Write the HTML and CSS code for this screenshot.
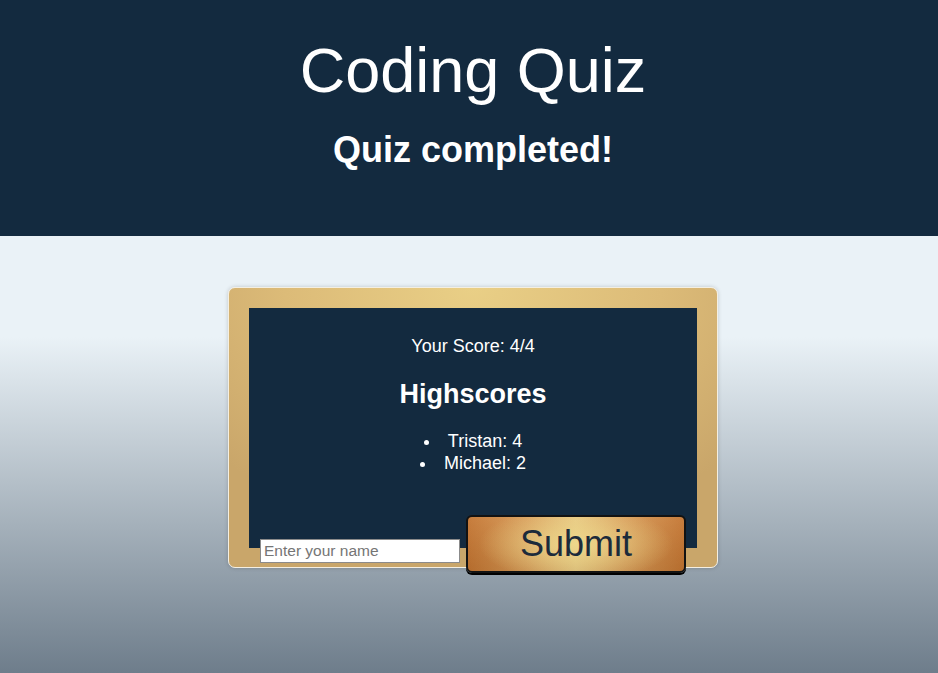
FILE: index.html
```html
<!DOCTYPE html>
<html lang="en">
<head>
<meta charset="utf-8">
<title>Coding Quiz</title>
<link rel="stylesheet" href="styles.css">
</head>
<body>
<header class="header">
  <h1 class="title">Coding Quiz</h1>
  <h2 class="subtitle">Quiz completed!</h2>
</header>
<main class="main">
  <section class="card">
    <div class="panel">
      <p class="score">Your Score: 4/4</p>
      <h3 class="hs-title">Highscores</h3>
      <ul class="hs-list">
        <li>Tristan: 4</li>
        <li>Michael: 2</li>
      </ul>
    </div>
    <form class="form-row">
      <input class="name-input" type="text" placeholder="Enter your name">
      <button class="submit" type="button">Submit</button>
    </form>
  </section>
</main>
</body>
</html>
```
FILE: styles.css
```css
html, body {
  margin: 0;
  padding: 0;
}
body {
  min-height: 673px;
  font-family: "Liberation Sans", Arial, sans-serif;
  background: linear-gradient(to bottom, #eaf2f7 0%, #eaf2f7 50%, #6e7d8b 100%);
}
.header {
  background: #132a3f;
  color: #fff;
  height: 236px;
  box-sizing: border-box;
  padding: 33px 0 0 8px;
  text-align: center;
}
.title {
  margin: 0;
  font-size: 63px;
  font-weight: normal;
  line-height: 74px;
}
.subtitle {
  margin: 22px 0 0;
  font-size: 36px;
  font-weight: bold;
  line-height: 42px;
}
.main {
  display: flex;
  justify-content: center;
  padding: 51px 0 0 8px;
}
.card {
  width: 490px;
  box-sizing: border-box;
  padding: 20px;
  border: 1px solid #f4efe2;
  border-radius: 7px;
  background: radial-gradient(ellipse 70% 90% at 50% 0%, #e9cf86 0%, #dcbb78 55%, #c9a66a 100%);
  box-shadow: 0 0 4px rgba(0,0,0,0.18);
}
.panel {
  height: 240px;
  background: #132a3f;
  color: #fff;
  text-align: center;
  box-sizing: border-box;
  padding-top: 27px;
}
.score {
  margin: 0;
  font-size: 18px;
  line-height: 22px;
}
.hs-title {
  margin: 21px 0 0;
  font-size: 27px;
  line-height: 32px;
  font-weight: bold;
}
.hs-list {
  margin: 20px 0 0;
  padding: 0;
  list-style: disc inside;
  font-size: 18px;
  line-height: 22px;
}
.form-row {
  display: flex;
  justify-content: space-between;
  align-items: flex-end;
  padding: 0 11px;
  margin: -33px 0 -26px;
}
.name-input {
  width: 200px;
  height: 24px;
  box-sizing: border-box;
  margin: 0 0 10px;
  padding: 1px 3px;
  border: 1px solid #8b8b8b;
  font-family: "Liberation Sans", Arial, sans-serif;
  font-size: 15.5px;
  background: #fff;
}
.name-input::placeholder {
  color: #757575;
}
.submit {
  width: 220px;
  height: 58px;
  box-sizing: border-box;
  border: 2px solid #121212;
  border-radius: 6px;
  background:
    radial-gradient(ellipse 45% 70% at 50% 50%, rgba(240,218,140,0.9), rgba(240,218,140,0) 100%),
    linear-gradient(to bottom, rgba(255,255,255,0.06), rgba(0,0,0,0.08)),
    linear-gradient(to right, #c47531 0%, #d89c58 28%, #e6c57e 50%, #d89c58 72%, #c47531 100%);
  box-shadow: 0 2px 0 #000;
  font-family: "Liberation Sans", Arial, sans-serif;
  font-size: 36px;
  color: #1c2b3b;
  padding: 0;
  line-height: 54px;
}
```
